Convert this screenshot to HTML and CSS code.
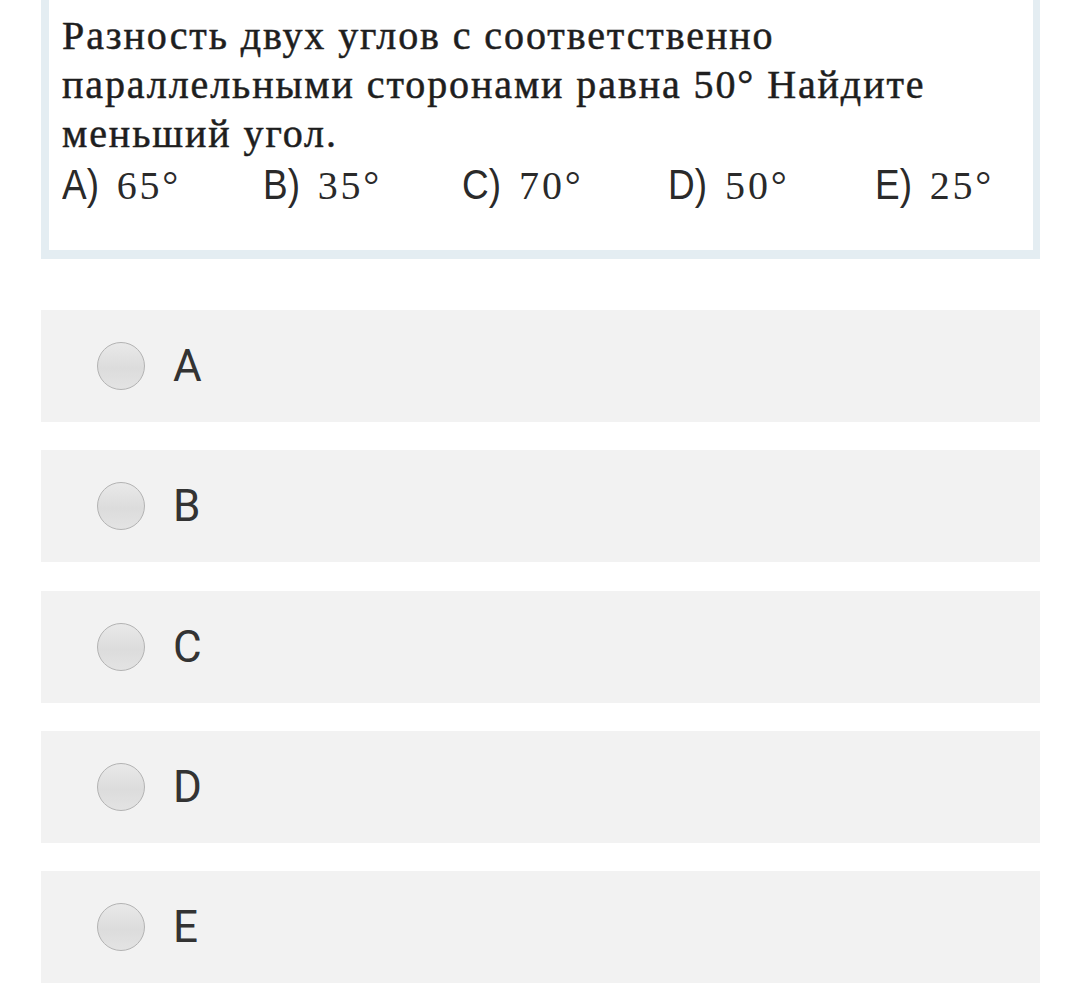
FILE: index.html
```html
<!DOCTYPE html>
<html lang="ru">
<head>
<meta charset="utf-8">
<title>Вопрос</title>
<link rel="stylesheet" href="styles.css">
</head>
<body>
<div class="page">
  <div class="question">
    <p class="q-text">Разность двух углов с соответственно<br>параллельными сторонами равна 50° Найдите<br>меньший угол.</p>
    <div class="answers">
      <span class="ans"><span class="let">A)</span> <span class="num">65°</span></span>
      <span class="ans"><span class="let">B)</span> <span class="num">35°</span></span>
      <span class="ans"><span class="let">C)</span> <span class="num">70°</span></span>
      <span class="ans"><span class="let">D)</span> <span class="num">50°</span></span>
      <span class="ans"><span class="let">E)</span> <span class="num">25°</span></span>
    </div>
  </div>
  <div class="options">
    <label class="option"><span class="radio"></span><span class="opt-label">A</span></label>
    <label class="option"><span class="radio"></span><span class="opt-label">B</span></label>
    <label class="option"><span class="radio"></span><span class="opt-label">C</span></label>
    <label class="option"><span class="radio"></span><span class="opt-label">D</span></label>
    <label class="option"><span class="radio"></span><span class="opt-label">E</span></label>
  </div>
</div>
</body>
</html>
```

FILE: styles.css
```css
html, body {
  margin: 0;
  padding: 0;
  background: #ffffff;
}
.page {
  width: 999px;
  margin-left: 41px;
}
.question {
  background: #ffffff;
  border-style: solid;
  border-color: #e4edf2;
  border-width: 0 7px 9px 8px;
  padding: 11px 0 0 13px;
  box-sizing: content-box;
  height: 239px;
}
.q-text {
  margin: 0;
  font-family: "Liberation Serif", "Times New Roman", serif;
  font-size: 40px;
  letter-spacing: 1.9px;
  line-height: 49px;
  color: #1e1e1e;
  -webkit-text-stroke: 0.5px #1e1e1e;
}
.answers {
  display: flex;
  margin-top: 2px;
  font-size: 39px;
  line-height: 50px;
  color: #2a2a2a;
}
.ans {
  white-space: pre;
}
.ans:nth-child(1) { width: 201px; }
.ans:nth-child(2) { width: 199px; }
.ans:nth-child(3) { width: 206px; }
.ans:nth-child(4) { width: 207px; }
.let {
  font-family: "Liberation Sans", Arial, sans-serif;
  font-size: 42px;
  display: inline-block;
  transform: scaleX(0.88);
  transform-origin: left center;
  margin-right: 3px;
}
.num {
  font-family: "Liberation Serif", "Times New Roman", serif;
  font-size: 40px;
  letter-spacing: 2.8px;
}
.options {
  display: flex;
  flex-direction: column;
  gap: 28.25px;
  margin-top: 51px;
}
.option {
  display: flex;
  align-items: center;
  height: 112px;
  background: #f2f2f2;
  padding-left: 56px;
}
.radio {
  width: 46px;
  height: 46px;
  border-radius: 50%;
  border: 1px solid #b3b3b3;
  background: linear-gradient(#e9e9e9, #dcdcdc 55%, #e3e3e3);
  flex: none;
}
.opt-label {
  margin-left: 28px;
  font-family: Roboto, "Noto Sans", sans-serif;
  font-size: 44px;
  color: #333333;
}
```
